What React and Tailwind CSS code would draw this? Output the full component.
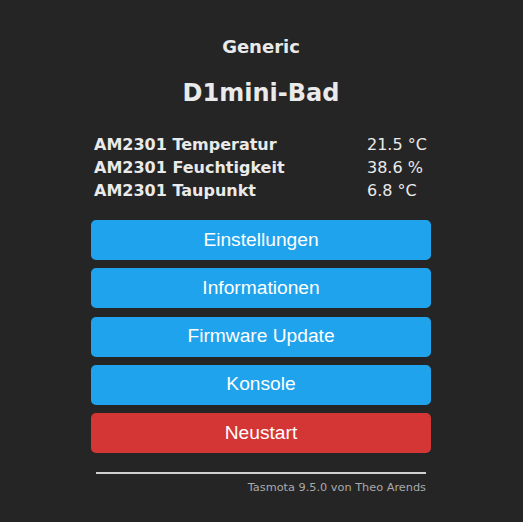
import React from 'react';

const SENSORS = [
  { label: 'AM2301 Temperatur', value: '21.5 °C' },
  { label: 'AM2301 Feuchtigkeit', value: '38.6 %' },
  { label: 'AM2301 Taupunkt', value: '6.8 °C' },
];

const BUTTONS = [
  { label: 'Einstellungen', red: false },
  { label: 'Informationen', red: false },
  { label: 'Firmware Update', red: false },
  { label: 'Konsole', red: false },
  { label: 'Neustart', red: true },
];

const App = () => {
  return (
    <div className="min-h-[522px] bg-[#252525] text-[#eaeaea] font-['DejaVu_Sans',Verdana,sans-serif]">
      <div className="w-[340px] ml-[91px] pt-[36px]">
        {/* Header */}
        <div className="text-center">
          <div className="text-[18px] font-bold leading-[22px]">Generic</div>
          <div className="text-[24px] font-bold leading-[28px] mt-[21px]">D1mini-Bad</div>
        </div>

        {/* Sensor table */}
        <div className="mt-[26px] text-[16px] leading-[23px]">
          {SENSORS.map(s => (
            <div key={s.label} className="flex">
              <div className="w-[276px] pl-[3px] font-bold">{s.label}</div>
              <div>{s.value}</div>
            </div>
          ))}
        </div>

        {/* Buttons */}
        <div className="mt-[18px] flex flex-col gap-[8.25px]">
          {BUTTONS.map(b => (
            <button
              key={b.label}
              className={`w-full h-[40px] rounded-[5px] text-white text-[19.2px] font-['Liberation_Sans',Arial,sans-serif] ${
                b.red ? 'bg-[#d43535]' : 'bg-[#1fa3ec]'
              }`}
            >
              {b.label}
            </button>
          ))}
        </div>

        {/* Footer */}
        <div className="mt-[19px] mx-[5px]">
          <div className="h-[2px] bg-[#d0d0d0]" />
          <div className="text-right text-[11.3px] text-[#aaaaaa] mt-[6px]">Tasmota 9.5.0 von Theo Arends</div>
        </div>
      </div>
    </div>
  );
};

export default App;
